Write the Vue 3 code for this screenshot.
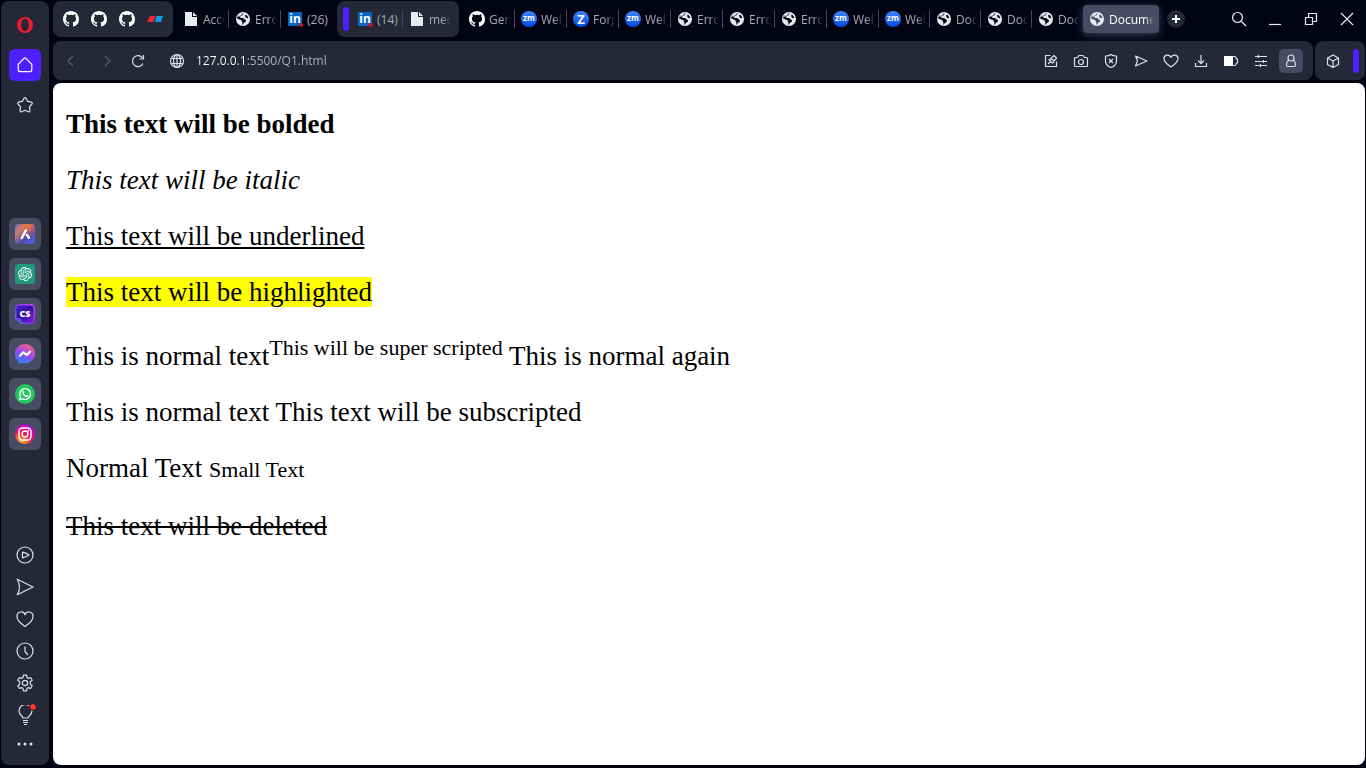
<script setup>
import { ref } from 'vue'

const address = ref('127.0.0.1:5500/Q1.html')

const letters = { linkedin: 'in', zm: 'zm', zed: 'Z' }

const runs = [
  {
    name: 'lead',
    tabs: [
      { icon: 'file', title: 'Acce' },
      { icon: 'world', title: 'Error' },
      { icon: 'linkedin', title: '(26)', fits: true, last: true },
    ],
  },
  {
    name: 'island',
    tabs: [
      { icon: 'linkedin', title: '(14)', fits: true },
      { icon: 'file', title: 'med', last: true },
    ],
  },
  {
    name: 'rest',
    tabs: [
      { icon: 'github', title: 'Gene' },
      { icon: 'zm', title: 'Web' },
      { icon: 'zed', title: 'Forg' },
      { icon: 'zm', title: 'Web' },
      { icon: 'world', title: 'Error' },
      { icon: 'world', title: 'Error' },
      { icon: 'world', title: 'Error' },
      { icon: 'zm', title: 'Web' },
      { icon: 'zm', title: 'Web', narrow: true },
      { icon: 'world', title: 'Docu', narrow: true },
      { icon: 'world', title: 'Docu', narrow: true },
      { icon: 'world', title: 'Docu', narrow: true, last: true },
    ],
  },
]
const actions = [
  ['edit', 'Edit page'],
  ['camera', 'Snapshot'],
  ['shield', 'Ad blocker'],
  ['send', 'Send to My Flow'],
  ['heart', 'Add to bookmarks'],
  ['download', 'Downloads'],
  ['battery', 'Battery saver'],
  ['sliders', 'Easy setup'],
  ['person', 'Profile'],
]
const apps = [
  ['aria', 'Aria'],
  ['gpt', 'ChatGPT'],
  ['cs', 'ChatSonic'],
  ['messenger', 'Messenger'],
  ['whatsapp', 'WhatsApp'],
  ['instagram', 'Instagram'],
]
const tools = [
  ['player', 'Player'],
  ['flow', 'My Flow'],
  ['love', 'Bookmarks'],
  ['clock', 'History'],
  ['gear', 'Settings'],
  ['bulb', 'Tips'],
]
</script>

<template>
  <svg class="sprite" aria-hidden="true">
    <defs>
      <linearGradient id="g-aria" x1="0" y1="0" x2="1" y2="1"><stop offset="0" stop-color="#4a78c8" /><stop offset=".28" stop-color="#c98072" /><stop offset=".6" stop-color="#5148a8" /><stop offset="1" stop-color="#4a6cf0" /></linearGradient>
      <radialGradient id="g-ariahot" cx=".65" cy=".1" r=".6"><stop offset="0" stop-color="#e8703c" /><stop offset="1" stop-color="#e8703c" stop-opacity="0" /></radialGradient>
      <linearGradient id="g-cs" x1="0" y1="0" x2="1" y2="1"><stop offset="0" stop-color="#4626d0" /><stop offset=".5" stop-color="#3410a4" /><stop offset="1" stop-color="#8a22dc" /></linearGradient>
      <linearGradient id="g-csedge" x1="0" y1="1" x2="1" y2="0"><stop offset="0" stop-color="#3fa2ff" /><stop offset=".4" stop-color="#8032e8" /><stop offset="1" stop-color="#c64cf0" /></linearGradient>
      <linearGradient id="g-msg" x1=".25" y1="1" x2=".75" y2="0"><stop offset="0" stop-color="#168cff" /><stop offset=".5" stop-color="#9a48f0" /><stop offset="1" stop-color="#f8627c" /></linearGradient>
      <radialGradient id="g-insta" cx=".25" cy="1" r="1.1"><stop offset="0" stop-color="#ffc93c" /><stop offset=".3" stop-color="#fb6a28" /><stop offset=".55" stop-color="#f0145c" /><stop offset=".8" stop-color="#d404ae" /><stop offset="1" stop-color="#7c18e8" /></radialGradient>
    </defs>
    <symbol id="i-github" viewBox="0 0 16 16"><path fill="#fff" d="M8 0C3.58 0 0 3.58 0 8c0 3.54 2.29 6.53 5.47 7.59.4.07.55-.17.55-.38 0-.19-.01-.82-.01-1.49-2.01.37-2.53-.49-2.69-.94-.09-.23-.48-.94-.82-1.13-.28-.15-.68-.52-.01-.53.63-.01 1.08.58 1.23.82.72 1.21 1.87.87 2.33.66.07-.52.28-.87.51-1.07-1.78-.2-3.64-.89-3.64-3.95 0-.87.31-1.59.82-2.15-.08-.2-.36-1.02.08-2.12 0 0 .67-.21 2.2.82.64-.18 1.32-.27 2-.27s1.36.09 2 .27c1.53-1.04 2.2-.82 2.2-.82.44 1.1.16 1.92.08 2.12.51.56.82 1.27.82 2.15 0 3.07-1.87 3.75-3.65 3.95.29.25.54.73.54 1.48 0 1.07-.01 1.93-.01 2.2 0 .21.15.46.55.38A8.01 8.01 0 0 0 16 8c0-4.42-3.58-8-8-8z" /></symbol>
    <symbol id="i-flag" viewBox="0 0 16 16"><path fill="#f0283e" d="M3 5h5.5L6.500 11H0z" /><path fill="#0a9fe4" d="M9.300 5H16l-2 6H8z" /></symbol>
    <symbol id="i-file" viewBox="0 0 16 16"><path fill="#e9ebf0" d="M2 1h7v5h5v9H2z" /><path fill="#e9ebf0" d="M10 1l4 4h-4z" /></symbol>
    <symbol id="i-world" viewBox="0 0 16 16"><circle cx="8" cy="8" r="7" fill="#e9ebf0" /><path class="cut" d="M9 2.500C7.700 3 8 4.200 6.900 4.600 5.500 5 5 5.500 5.300 6.500c.5.9 1.900.3 3.100.7 1.100.3.900 1.300 1.800 1.500 1 .3 1 1.200.4 2-.6.7-1.600.8-2.100 1.700-.4.8-.7 1.300-1.500 1.100l.6-1.700c.1-.6-.9-.8-.9-1.600 0-1-.6-1.300-1.500-1.500-1.200-.3-2.200-.9-3.100-1.200C2.300 5 5 2.300 9 2.500zM10.800 3.600c1.300.8 2.200 2 2.500 3.400-.9.300-1.900.2-2.500-.4-.8-.9-.9-2 0-3z" /><path fill="#e9ebf0" d="M3.600 4.500C4.800 3 6 2.300 7.300 2l.2 1.200-1.300.9-1.400 1.400-1.500.3z" /></symbol>

    <symbol id="i-back" viewBox="0 0 16 16"><path class="ln" d="M10 3L5 8l5 5" /></symbol>
    <symbol id="i-forward" viewBox="0 0 16 16"><path class="ln" d="M6 3l5 5-5 5" /></symbol>
    <symbol id="i-reload" viewBox="0 0 16 16"><path class="ln" d="M13 10.500A5.500 5.500 0 1 1 12.600 5M13.500 2v4h-4" /></symbol>
    <symbol id="i-globe" viewBox="0 0 16 16"><g class="ln"><circle cx="8" cy="8" r="6.500" /><ellipse cx="8" cy="8" rx="3.500" ry="6.500" /><path d="M2.500 5.500h11M2.500 10.500h11M8 1.500v13" /></g></symbol>
    <symbol id="i-edit" viewBox="0 0 16 16"><path class="ln" d="M7.500 2.500h-5v11h11v-5M5 11l3-3M6 6.500c1.500-.5 3-.5 4 .5s1 2 .5 3M5.600 6.300l4.200 4.200M7.500 6l3.500-3.500L13.500 5 10.500 8.500" /></symbol>
    <symbol id="i-camera" viewBox="0 0 16 16"><path class="ln" d="M1.500 5.500a1 1 0 0 1 1-1h2l1.500-2h4l1.500 2h2a1 1 0 0 1 1 1v7a1 1 0 0 1-1 1h-11a1 1 0 0 1-1-1z" /><circle class="ln" cx="8" cy="9" r="2.500" /></symbol>
    <symbol id="i-shield" viewBox="0 0 16 16"><path class="ln" d="M8 1.500c1.500 1.200 3.500 1.500 5.500 1.500v5c0 3-2.500 5.500-5.500 6.500C5 13.500 2.500 11 2.500 8V3C4.500 3 6.500 2.700 8 1.500zM6 6l4 4M10 6l-4 4" /></symbol>
    <symbol id="i-send" viewBox="0 0 16 16"><path class="ln" d="M2.500 3L14 8 2.500 13l2-5z" /></symbol>
    <symbol id="i-heart" viewBox="0 0 16 16"><path class="ln" d="M8 14C5 12 1 9 1 5.500 1 1.800 6 .8 8 4.300 10 .8 15 1.800 15 5.500 15 9 11 12 8 14z" /></symbol>
    <symbol id="i-download" viewBox="0 0 16 16"><path class="ln" d="M8 2v8M5 7.500l3 3 3-3M2.500 10v3.500h11V10" /></symbol>
    <symbol id="i-battery" viewBox="0 0 16 16"><path fill="#fff" d="M1 3h9v10H1z" /><path class="ln" d="M10 3.500h1.500q1.500 0 1.500 1.500l1.500 1.500v3L13 11q0 1.500-1.500 1.500H10" /></symbol>
    <symbol id="i-sliders" viewBox="0 0 16 16"><path class="ln" d="M2 3.500h12M2 8.500h12M2 12.500h12M5.500 2v3M10.500 7v3M7.500 11v3" /></symbol>
    <symbol id="i-person" viewBox="0 0 16 16"><circle class="ln" cx="8" cy="5" r="3" /><path class="ln" d="M5.700 7C4 8.500 3.500 10 3.500 12c0 1 .5 1.500 1.500 1.500h6c1 0 1.500-.5 1.500-1.500 0-2-.5-3.500-2.200-5" /></symbol>
    <symbol id="i-box" viewBox="0 0 16 16"><path class="ln" d="M8 2l5.500 3v6.500L8 14.500 2.500 11.500V5zM2.500 5L8 8l5.500-3M8 8v6.500" /></symbol>
    <symbol id="i-search" viewBox="0 0 16 16"><circle class="ln" cx="6.500" cy="6.500" r="5" /><path class="ln" d="M10 10l5 5" /></symbol>
    <symbol id="i-min" viewBox="0 0 16 16"><path class="ln" d="M2 13.500h12" /></symbol>
    <symbol id="i-max" viewBox="0 0 16 16"><path class="ln" d="M2.500 6.500h7v7h-7zM5.500 6V2.500h8v8H10" /></symbol>
    <symbol id="i-close" viewBox="0 0 16 16"><path class="ln" d="M2 2l12 12M14 2L2 14" /></symbol>
    <symbol id="i-plus" viewBox="0 0 16 16"><path d="M8 4v8M4 8h8" stroke="#fff" stroke-width="2" fill="none" /></symbol>

    <symbol id="i-opera" viewBox="0 0 18 18"><path fill="#f6192e" fill-rule="evenodd" d="M9 1a8 8 0 1 0 0 16A8 8 0 0 0 9 1zm0 1.800c2.300 0 3.900 2.700 3.900 6.200S11.300 15.200 9 15.200 5.100 12.500 5.100 9 6.700 2.800 9 2.800z" /></symbol>
    <symbol id="i-home" viewBox="0 0 18 18"><path class="ln" d="M2.200 8.300L8 2.300q1-.9 2 0l5.800 6V13.500q0 2.200-2.200 2.200H4.400q-2.200 0-2.200-2.200z" /></symbol>
    <symbol id="i-star" viewBox="0 0 18 18"><path class="ln" d="M8.100 2.200q.9-1.300 1.800 0l1.800 3.200 3.700.8q1.600.5.6 1.800l-2.500 2.900.4 3.700q0 1.700-1.600 1.100L9 14.300l-3.300 1.400q-1.600.6-1.600-1.100l.4-3.700L2 8q-1-1.300.6-1.800l3.700-.8z" /></symbol>
    <symbol id="i-player" viewBox="0 0 18 18"><circle class="ln" cx="9" cy="9" r="8" /><path class="ln" d="M6.500 6.200q3.500.6 6.500 2.800-3 2.200-6.500 2.800z" /></symbol>
    <symbol id="i-flow" viewBox="0 0 18 18"><path class="ln" d="M1.200 1.200L17 9 1.200 16.800C4 12 4 6 1.200 1.200z" /></symbol>
    <symbol id="i-love" viewBox="0 0 18 18"><path class="ln" d="M9 16.500C6 14.500 1 10.800 1 6.500 1 1.200 7.500.4 9 4.800 10.500.4 17 1.200 17 6.500c0 4.300-5 8-8 10z" /></symbol>
    <symbol id="i-clock" viewBox="0 0 18 18"><circle class="ln" cx="9" cy="9" r="8" /><path class="ln" d="M9 4.500v5l3 3.500" /></symbol>
    <symbol id="i-gear" viewBox="0 0 18 18"><path class="ln" d="M7.400 1.200h3.200l.4 2.400 1.300.8 2.300-.9 1.600 2.800-1.900 1.500v2.400l1.900 1.500-1.600 2.800-2.300-.9-1.300.8-.4 2.400H7.400L7 14.400l-1.300-.8-2.300.9-1.600-2.800 1.900-1.500V7.800L1.800 6.300l1.600-2.800 2.300.9L7 3.600z" /><circle class="ln" cx="9" cy="9" r="2.700" /></symbol>
    <symbol id="i-bulb" viewBox="0 0 20 20"><path class="ln" d="M8 13c0-2-4-3-4-7a6.500 6.500 0 0 1 13 0c0 4-4 5-4 7zM8 15.500h5M8 17.500h5M9 19.500h3" /></symbol>
    <symbol id="i-dots" viewBox="0 0 18 18"><g fill="#e2e4ec"><circle cx="3" cy="9" r="1.500" /><circle cx="9" cy="9" r="1.500" /><circle cx="15" cy="9" r="1.500" /></g></symbol>

    <symbol id="i-aria" viewBox="0 0 20 20"><rect width="20" height="20" rx="4" fill="url(#g-aria)" /><rect width="20" height="20" rx="4" fill="url(#g-ariahot)" /><path d="M6.800 14l4-7.500M12 11l1.800 2.700" stroke="#fff" stroke-width="2.600" stroke-linecap="round" fill="none" /></symbol>
    <symbol id="i-gpt" viewBox="0 0 20 20"><rect width="20" height="20" rx="3" fill="#209a7c" /><path transform="translate(3 3) scale(.585)" fill="#fff" d="M22.2819 9.8211a5.9847 5.9847 0 0 0-.5157-4.9108 6.0462 6.0462 0 0 0-6.5098-2.9A6.0651 6.0651 0 0 0 4.9807 4.1818a5.9847 5.9847 0 0 0-3.9977 2.9 6.0462 6.0462 0 0 0 .7427 7.0966 5.98 5.98 0 0 0 .511 4.9107 6.051 6.051 0 0 0 6.5146 2.9001A5.9847 5.9847 0 0 0 13.2599 24a6.0557 6.0557 0 0 0 5.7718-4.2058 5.9894 5.9894 0 0 0 3.9977-2.9001 6.0557 6.0557 0 0 0-.7475-7.0729zm-9.022 12.6081a4.4755 4.4755 0 0 1-2.8764-1.0408l.1419-.0804 4.7783-2.7582a.7948.7948 0 0 0 .3927-.6813v-6.7369l2.02 1.1686a.071.071 0 0 1 .038.052v5.5826a4.504 4.504 0 0 1-4.4945 4.4944zm-9.6607-4.1254a4.4708 4.4708 0 0 1-.5346-3.0137l.142.0852 4.783 2.7582a.7712.7712 0 0 0 .7806 0l5.8428-3.3685v2.3324a.0804.0804 0 0 1-.0332.0615L9.74 19.9502a4.4992 4.4992 0 0 1-6.1408-1.6464zM2.3408 7.8956a4.485 4.485 0 0 1 2.3655-1.9728V11.6a.7664.7664 0 0 0 .3879.6765l5.8144 3.3543-2.0201 1.1685a.0757.0757 0 0 1-.071 0l-4.8303-2.7865A4.504 4.504 0 0 1 2.3408 7.872zm16.5963 3.8558L13.1038 8.364 15.1192 7.2a.0757.0757 0 0 1 .071 0l4.8303 2.7913a4.4944 4.4944 0 0 1-.6765 8.1042v-5.6772a.79.79 0 0 0-.407-.667zm2.0107-3.0231l-.142-.0852-4.7735-2.7818a.7759.7759 0 0 0-.7854 0L9.409 9.2297V6.8974a.0662.0662 0 0 1 .0284-.0615l4.8303-2.7866a4.4992 4.4992 0 0 1 6.6802 4.66zM8.3065 12.863l-2.02-1.1638a.0804.0804 0 0 1-.038-.0567V6.0742a4.4992 4.4992 0 0 1 7.3757-3.4537l-.142.0805L8.704 5.459a.7948.7948 0 0 0-.3927.6813zm1.0976-2.3654l2.602-1.4998 2.6069 1.4998v2.9994l-2.5974 1.4997-2.6067-1.4997Z" /></symbol>
    <symbol id="i-cs" viewBox="0 0 20 20"><path d="M4 .7h12A3.300 3.300 0 0 1 19.300 4v12a3.300 3.300 0 0 1-3.300 3.300H6.500L.7 14V4A3.300 3.300 0 0 1 4 .7z" fill="url(#g-cs)" stroke="url(#g-csedge)" stroke-width="1.400" /><path d="M.7 14H4q2.500 0 2.500 2.500v2.800z" fill="#7b3cf0" /></symbol>
    <symbol id="i-messenger" viewBox="0 0 20 20"><path fill="url(#g-msg)" d="M10 0a10 9.700 0 0 1 0 19.400c-1.200 0-2.200-.2-3.200-.5L3.500 20v-2.700A9.600 9.600 0 0 1 0 9.700C0 4 4.500 0 10 0z" /><path d="M5 11.800L8.300 8.300l3.500 2.700 3.200-3.300" stroke="#fff" stroke-width="2.200" stroke-linejoin="round" stroke-linecap="round" fill="none" /></symbol>
    <symbol id="i-whatsapp" viewBox="0 0 20 20"><circle cx="10" cy="10" r="10" fill="#22c55e" /><path d="M4.700 15.500l.8-2.800a5.400 5.400 0 1 1 2 2z" fill="none" stroke="#fff" stroke-width="1.300" /><path fill="#fff" d="M7.600 7.200c.4-.5 1-.4 1.200.1l.5 1.100c.1.400-.5.800-.4 1 .5 1 1.200 1.600 2.100 2 .4.1.6-.8 1-.7l1.200.6c.5.300.2 1.100-.3 1.500-1 .7-2.900 0-4.200-1.300S6.800 8.300 7.600 7.200z" /></symbol>
    <symbol id="i-instagram" viewBox="0 0 20 20"><circle cx="10" cy="10" r="10" fill="url(#g-insta)" /><g fill="none" stroke="#fff" stroke-width="1.400"><rect x="4" y="4" width="12" height="12" rx="3.500" /><circle cx="10" cy="10" r="3" /></g><circle cx="13.400" cy="6.600" r=".9" fill="#fff" /></symbol>
  </svg>

  <div class="browser">
    <nav class="sidebar" aria-label="Sidebar">
      <button class="side-btn" aria-label="Opera menu"><svg class="ic18"><use href="#i-opera" /></svg></button>
      <button class="side-btn home" aria-label="Home"><svg class="ic18"><use href="#i-home" /></svg></button>
      <button class="side-btn" aria-label="Pinboards"><svg class="ic18"><use href="#i-star" /></svg></button>
      <div class="apps">
        <button v-for="[id, label] in apps" :key="id" class="side-btn app" :aria-label="label">
          <svg class="ic20"><use :href="'#i-' + id" /></svg>
          <span v-if="id === 'cs'" class="cs-mark">CS</span>
        </button>
      </div>
      <div class="tools">
        <button v-for="[id, label] in tools" :key="id" class="side-btn" :aria-label="label">
          <svg :class="id === 'bulb' ? 'ic20' : 'ic18'"><use :href="'#i-' + id" /></svg>
          <span v-if="id === 'bulb'" class="dot"></span>
        </button>
        <button class="side-btn more" aria-label="More"><svg class="ic18"><use href="#i-dots" /></svg></button>
      </div>
    </nav>

    <div class="main">
      <header class="strip">
        <div class="pinned">
          <button v-for="n in 3" :key="n" class="pin" aria-label="GitHub"><svg class="ic16"><use href="#i-github" /></svg></button>
          <button class="pin" aria-label="Pinned site"><svg class="ic16"><use href="#i-flag" /></svg></button>
        </div>
        <div v-for="run in runs" :key="run.name" :class="['run', run.name]">
          <i v-if="run.name === 'island'" class="bar"></i>
          <button v-for="(t, i) in run.tabs" :key="i" class="tab" :class="{ last: t.last, narrow: t.narrow }">
            <b v-if="letters[t.icon]" :class="['fav', t.icon]">{{ letters[t.icon] }}</b>
            <svg v-else class="ic16"><use :href="'#i-' + t.icon" /></svg>
            <span class="title" :class="{ fits: t.fits }">{{ t.title }}</span>
          </button>
        </div>
        <button class="active"><svg class="ic16"><use href="#i-world" /></svg><span class="title">Document</span></button>
        <button class="add" aria-label="New tab"><svg class="ic16"><use href="#i-plus" /></svg></button>
        <div class="win">
          <button aria-label="Search tabs"><svg class="ic16"><use href="#i-search" /></svg></button>
          <button aria-label="Minimize"><svg class="ic16"><use href="#i-min" /></svg></button>
          <button aria-label="Restore"><svg class="ic16"><use href="#i-max" /></svg></button>
          <button aria-label="Close"><svg class="ic16"><use href="#i-close" /></svg></button>
        </div>
      </header>

      <div class="bars">
        <div class="toolbar">
          <div class="navs">
            <button class="dim" aria-label="Back"><svg class="ic16"><use href="#i-back" /></svg></button>
            <button class="dim" aria-label="Forward"><svg class="ic16"><use href="#i-forward" /></svg></button>
          </div>
          <button class="reload" aria-label="Reload"><svg class="ic16"><use href="#i-reload" /></svg></button>
          <svg class="ic16 site"><use href="#i-globe" /></svg>
          <input v-model="address" class="address" type="text" aria-label="Address" spellcheck="false" />
          <div class="actions">
            <button v-for="[id, label] in actions" :key="id" :class="['act', id]" :aria-label="label"><svg class="ic16"><use :href="'#i-' + id" /></svg></button>
          </div>
        </div>
        <div class="ext">
          <button class="act" aria-label="Extensions"><svg class="ic16"><use href="#i-box" /></svg></button>
          <i class="bar"></i>
        </div>
      </div>

      <main class="page">
        <p><b>This text will be bolded</b></p>
        <p><i>This text will be italic</i></p>
        <p><u>This text will be underlined</u></p>
        <p><mark>This text will be highlighted</mark></p>
        <p>This is normal text<sup>This will be super scripted</sup> This is normal again</p>
        <p>This is normal text This text will be subscripted</p>
        <p>Normal Text <small>Small Text</small></p>
        <p><del>This text will be deleted</del></p>
      </main>
    </div>
  </div>
</template>

<style>
body {
  background: #020414;
}
</style>

<style scoped>
.sprite {
  position: absolute;
  width: 0;
  height: 0;
}
.browser {
  box-sizing: border-box;
  display: flex;
  gap: 4px;
  min-height: 100vh;
  padding: 1px 1px 3px;
  background: #020414;
  font-family: "Open Sans", "Noto Sans", sans-serif;
  font-size: 12px;
}
button {
  display: flex;
  align-items: center;
  justify-content: center;
  box-sizing: border-box;
  margin: 0;
  padding: 0;
  border: 0;
  background: none;
  color: inherit;
  font: inherit;
}
svg {
  flex: none;
}
.ic16 {
  width: 16px;
  height: 16px;
}
.ic18 {
  width: 18px;
  height: 18px;
}
.ic20 {
  width: 20px;
  height: 20px;
}
.ln {
  fill: none;
  stroke: currentColor;
  stroke-width: 1.2;
  stroke-linejoin: round;
}
.cut {
  fill: var(--cut, #020414);
}

.sidebar {
  display: flex;
  flex-direction: column;
  align-items: center;
  gap: 8px;
  box-sizing: border-box;
  width: 48px;
  padding: 8px 0;
  border-radius: 8px;
  background: #252836;
  color: #dfe1ea;
}
.side-btn {
  position: relative;
  width: 32px;
  height: 32px;
  border-radius: 6px;
}
.home {
  background: #4e20ff;
  color: #fff;
}
.apps {
  display: flex;
  flex-direction: column;
  gap: 8px;
  margin-top: 89px;
}
.app {
  background: #494b63;
}
.cs-mark {
  position: absolute;
  inset: 0;
  color: #fff;
  font-size: 9px;
  font-weight: 800;
  line-height: 32px;
  text-align: center;
}
.tools {
  display: flex;
  flex-direction: column;
  margin-top: auto;
}
.more {
  height: 26px;
}
.dot {
  position: absolute;
  top: 4px;
  right: 4px;
  width: 6px;
  height: 6px;
  border: 1px solid #10121f;
  border-radius: 50%;
  background: #ff3a2c;
}

.main {
  display: flex;
  flex: 1;
  flex-direction: column;
  min-width: 0;
}
.strip {
  display: flex;
  align-items: center;
  height: 36px;
  color: #a9abb2;
}
.pinned {
  display: flex;
  align-items: center;
  gap: 12px;
  box-sizing: border-box;
  height: 36px;
  margin-right: 4px;
  padding: 0 10px;
  border-radius: 8px;
  background: #252836;
}
.run {
  display: flex;
  align-items: center;
  height: 36px;
}
.island {
  margin: 0 4px;
  padding: 0 4px 0 6px;
  border-radius: 8px;
  background: #252836;
}
.bar {
  width: 6px;
  height: 24px;
  border-radius: 3px;
  background: #4e20ff;
}
.island .bar {
  margin-right: 2px;
}
.tab {
  justify-content: flex-start;
  gap: 4px;
  width: 52px;
  height: 18px;
  padding: 0 3px 0 6px;
  border-right: 1px solid #43465a;
}
.tab.narrow {
  width: 51px;
}
.tab.last {
  border-right-color: transparent;
}
.fav {
  flex: none;
  width: 16px;
  height: 16px;
  border-radius: 50%;
  background: linear-gradient(#3c86f8, #0648e8);
  color: #fff;
  font-size: 8px;
  font-weight: 700;
  line-height: 14px;
  text-align: center;
}
.zed {
  font-size: 13px;
  line-height: 16px;
}
.linkedin {
  position: relative;
  width: 14px;
  height: 14px;
  margin: 0 1px;
  border-radius: 1px;
  background: #0a66c2;
  font-size: 12px;
  line-height: 13px;
}
.linkedin::after {
  content: "";
  position: absolute;
  right: -1px;
  bottom: -1px;
  width: 4px;
  height: 4px;
  border-radius: 50%;
  background: #e00b1c;
}
.title {
  flex: 1;
  overflow: hidden;
  text-align: left;
  white-space: nowrap;
  mask-image: linear-gradient(to left, transparent, #000 9px);
}
.title.fits {
  overflow: visible;
  mask-image: none;
}
.active {
  --cut: #494b63;
  justify-content: flex-start;
  gap: 4px;
  width: 76px;
  height: 28px;
  padding: 0 5px 0 6px;
  border-radius: 4px;
  background: #494b63;
  box-shadow: 0 2px 8px #3b3d50;
  color: #fff;
}
.add {
  width: 18px;
  height: 18px;
  margin-left: 8px;
  border-radius: 50%;
  background: #252836;
}
.win {
  display: flex;
  gap: 20px;
  margin-left: auto;
  padding-right: 10px;
  color: #e8e9ee;
}

.bars {
  display: flex;
  gap: 2px;
  margin: 4px 0 3px;
  color: #dfe1ea;
}
.toolbar,
.ext {
  display: flex;
  align-items: center;
  box-sizing: border-box;
  height: 39px;
  border-radius: 8px;
  background: #252836;
}
.toolbar {
  flex: 1;
  padding: 0 10px;
}
.navs {
  display: flex;
  gap: 20px;
}
.reload {
  margin-left: 15px;
}
.dim {
  color: #5b5e6e;
}
.site {
  margin: 0 11px 0 23px;
}
.address {
  flex: 1;
  min-width: 0;
  padding: 0;
  border: 0;
  outline: 0;
  background: linear-gradient(to right, #fff 51px, #b3b6c0 51px);
  background-clip: text;
  color: transparent;
  font: inherit;
}
.actions {
  display: flex;
  gap: 6px;
}
.act {
  width: 24px;
  height: 24px;
  border-radius: 5px;
}
.person {
  background: #494b63;
}
.ext {
  gap: 8px;
  padding: 0 6px;
}

.page {
  flex: 1;
  padding: 0 13px;
  border-radius: 8px;
  background: #fff;
  color: #000;
  font: 27px/30px "Liberation Serif", "Times New Roman", serif;
}
p {
  margin: 26px 0;
}
sup,
small {
  font-size: 22px;
}
mark {
  background: #ff0;
}
</style>
